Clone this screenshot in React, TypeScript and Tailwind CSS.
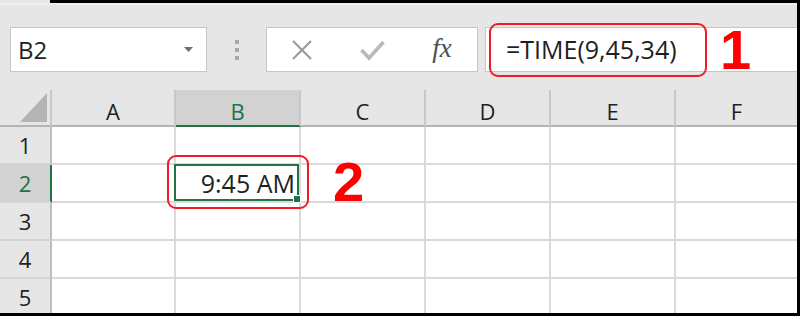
import React from "react";

const cols = ["A", "B", "C", "D", "E", "F"];
const rows = [1, 2, 3, 4, 5];

function NameBox() {
  return (
    <div className="w-[197px] h-[45px] bg-white border border-[#c6c6c6] flex items-center pl-[7px] pr-[13px]">
      <span className="flex-1 text-[24px] leading-none text-[#1f1f1f]">B2</span>
      <svg width="9" height="5" viewBox="0 0 9 5">
        <polygon points="0,0 9,0 4.5,5" fill="#6f6f6f" />
      </svg>
    </div>
  );
}

function FormulaButtons() {
  return (
    <div className="w-[212px] h-[45px] bg-white border border-[#c6c6c6] grid grid-cols-3">
      <div className="flex items-center justify-center">
        <svg width="22" height="20" viewBox="0 0 22 20">
          <path d="M2 1 L20 19 M20 1 L2 19" stroke="#9c9c9c" strokeWidth="2.2" fill="none" />
        </svg>
      </div>
      <div className="flex items-center justify-center">
        <svg width="25" height="22" viewBox="0 0 25 22">
          <path d="M1.5 11 L9 19 L23.5 3" stroke="#b9b9b9" strokeWidth="3.6" fill="none" />
        </svg>
      </div>
      <div className="flex items-center justify-center">
        <span className="font-['Liberation_Serif',serif] italic text-[27px] leading-none text-[#4f4f4f] -mt-[3px]">
          fx
        </span>
      </div>
    </div>
  );
}

export default function App() {
  return (
    <div className="w-[800px] h-[316px] flex flex-col overflow-hidden border-r-[3px] border-b-[3px] border-black bg-[#e6e6e6] font-['Open_Sans',sans-serif] text-[#1f1f1f]">
      {/* thin top strip */}
      <div className="flex h-[3px] shrink-0">
        <div className="w-[50px] bg-[#e6e6e6]" />
        <div className="flex-1 bg-black" />
      </div>

      {/* toolbar */}
      <div className="h-[87px] shrink-0 flex items-start pt-[22px] pl-[10px] border-t-2 border-[#f0f0f0]">
        <NameBox />
        <div className="w-[59px] h-[45px] flex flex-col items-center justify-center gap-[4px]">
          <div className="w-[4px] h-[4px] bg-[#a8a8a8]" />
          <div className="w-[4px] h-[4px] bg-[#a8a8a8]" />
          <div className="w-[4px] h-[4px] bg-[#a8a8a8]" />
        </div>
        <FormulaButtons />
        <div className="flex-1 ml-[7px] h-[45px] bg-white border-y border-l border-[#c6c6c6] flex items-center">
          <div className="ml-[3px] w-[218px] h-[54px] shrink-0 border-2 border-[#ee1c24] rounded-[9px] flex items-center pl-[15px]">
            <span className="text-[25px] leading-none text-[#1f1f1f]">=TIME(9,45,34)</span>
          </div>
          <span className="ml-[13px] font-['Liberation_Sans',sans-serif] font-bold text-[56px] leading-none text-[#ff0000]">
            1
          </span>
        </div>
      </div>

      {/* sheet grid */}
      <div className="flex-1 overflow-hidden">
        <div className="grid grid-cols-[52px_124px_125px_125px_125px_125px_1fr]">
          <div className="h-[37px] bg-[#e6e6e6] border-r-2 border-b-2 border-r-[#c8c8c8] border-b-[#b4b4b4] flex items-end justify-end pr-[3px] pb-[3px]">
            <svg width="27" height="29" viewBox="0 0 27 29">
              <polygon points="27,0 27,29 0,29" fill="#b4b4b4" />
            </svg>
          </div>
          {cols.map((c) => {
            const sel = c === "B";
            return (
              <div
                key={c}
                className={
                  sel
                    ? "h-[37px] bg-[#d2d2d2] border-r-2 border-b-2 border-r-[#c8c8c8] border-b-[#217346] flex items-center justify-center pt-[8px] text-[22px] text-[#217346]"
                    : c === "F"
                    ? "h-[37px] bg-[#e6e6e6] border-b-2 border-b-[#b4b4b4] flex items-center justify-center pt-[8px] text-[22px]"
                    : "h-[37px] bg-[#e6e6e6] border-r-2 border-b-2 border-r-[#c8c8c8] border-b-[#b4b4b4] flex items-center justify-center pt-[8px] text-[22px]"
                }
              >
                {c}
              </div>
            );
          })}

          {rows.map((r) => (
            <React.Fragment key={r}>
              <div
                className={
                  r === 2
                    ? "h-[38px] bg-[#d2d2d2] border-r-2 border-b-2 border-r-[#217346] border-b-[#d4d4d4] flex items-center justify-center text-[22px] text-[#217346]"
                    : "h-[38px] bg-[#e6e6e6] border-r-2 border-b-2 border-r-[#bdbdbd] border-b-[#d4d4d4] flex items-center justify-center text-[22px]"
                }
              >
                {r}
              </div>
              {cols.map((c) => {
                if (r === 2 && c === "B") {
                  return (
                    <div
                      key={c}
                      className="relative h-[38px] bg-white border-r-2 border-b-2 border-[#dadada] flex items-center justify-end pr-[4px]"
                    >
                      <span className="text-[25px] leading-none">9:45 AM</span>
                      <div className="absolute -left-[2px] -top-[1px] right-0 bottom-0 border-2 border-[#217346]" />
                      <div className="absolute -right-[2px] -bottom-[2px] w-[8px] h-[8px] bg-[#217346] border border-white" />
                      <div className="absolute -left-[9px] -top-[10px] -right-[10px] -bottom-[8px] border-2 border-[#ee1c24] rounded-[9px]" />
                    </div>
                  );
                }
                if (r === 2 && c === "C") {
                  return (
                    <div
                      key={c}
                      className="h-[38px] bg-white border-r-2 border-b-2 border-[#dadada] flex items-center pl-[32px] pb-[2px]"
                    >
                      <span className="font-['Liberation_Sans',sans-serif] font-bold text-[56px] leading-none text-[#ff0000]">
                        2
                      </span>
                    </div>
                  );
                }
                return (
                  <div
                    key={c}
                    className={
                      c === "F"
                        ? "h-[38px] bg-white border-b-2 border-[#dadada]"
                        : "h-[38px] bg-white border-r-2 border-b-2 border-[#dadada]"
                    }
                  />
                );
              })}
            </React.Fragment>
          ))}
        </div>
      </div>
    </div>
  );
}
